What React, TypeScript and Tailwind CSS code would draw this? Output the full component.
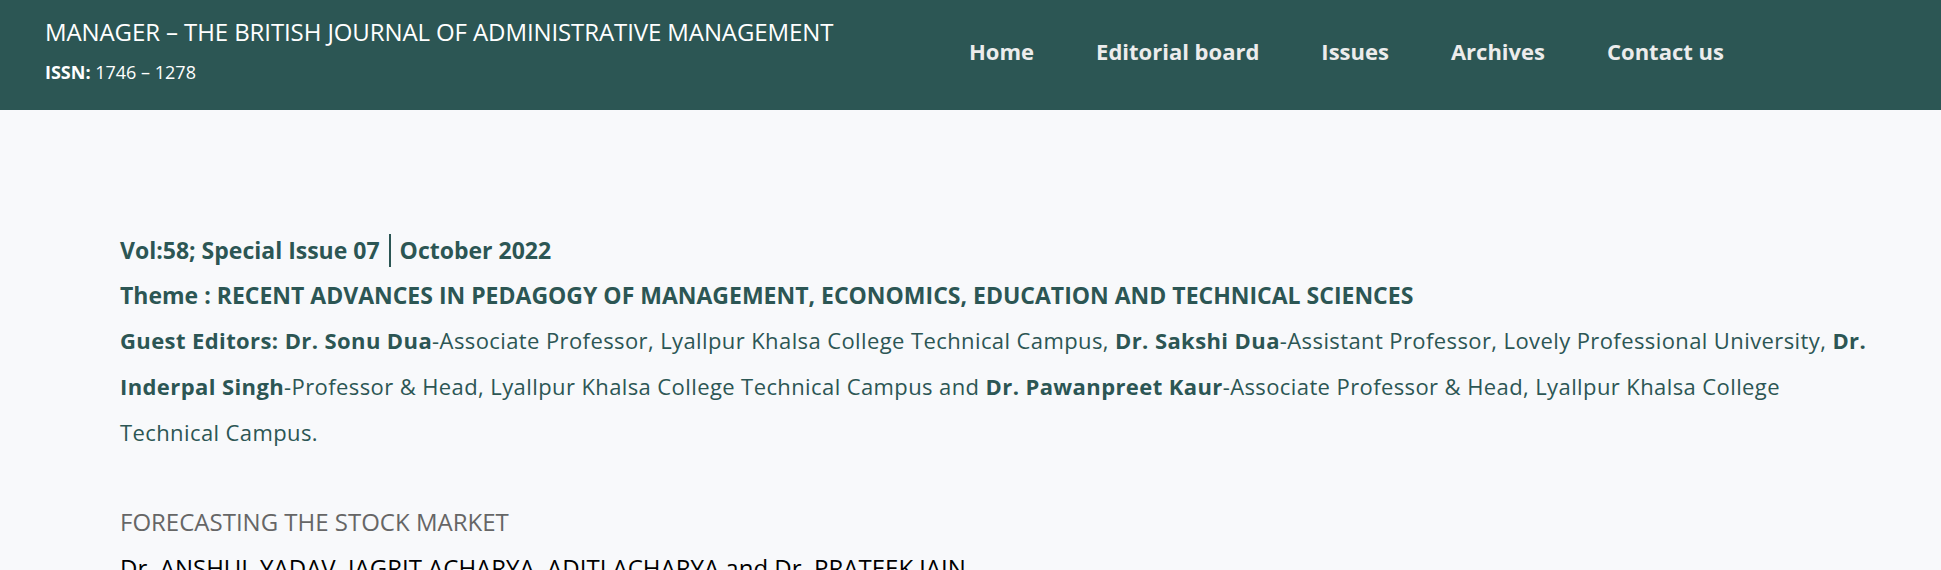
import React from 'react';

const navigation = ['Home', 'Editorial board', 'Issues', 'Archives', 'Contact us'];

export default function App() {
	return (
		<div className="min-h-screen bg-[#f8f9fb] font-['Open_Sans',sans-serif]">
			{/* Header */}
			<header className="h-[110px] bg-[#2c5654] flex">
				<div className="w-[969px] shrink-0 pl-[45px] pt-[16px]">
					<div className="text-[24px] leading-[32px] text-white tracking-[-0.1px]">
						MANAGER – THE BRITISH JOURNAL OF ADMINISTRATIVE MANAGEMENT
					</div>
					<div className="mt-[12px] text-[18px] leading-[24px] text-white">
						<span className="font-bold">ISSN:</span> 1746 – 1278
					</div>
				</div>
				<nav className="flex items-start pt-[36px] gap-[62px]">
					{navigation.map((item) => (
						<a key={item} href="#" className="text-[22px] leading-[30px] font-bold text-[#ececec]">
							{item}
						</a>
					))}
				</nav>
			</header>

			{/* Issue details */}
			<main className="pl-[120px] pr-[66px] pt-[117px] text-[#2c5654]">
				<div className="text-[23px] leading-[46px] font-bold flex items-center">
					Vol:58; Special Issue 07
					<span className="mx-[9px] w-[2px] h-[33px] bg-[#2c5654]"></span>
					October 2022
				</div>
				<div className="text-[23px] leading-[44px] font-bold">
					Theme : RECENT ADVANCES IN PEDAGOGY OF MANAGEMENT, ECONOMICS, EDUCATION AND TECHNICAL SCIENCES
				</div>
				<p className="text-[22px] leading-[46px] tracking-[0.4px]">
					<b>Guest Editors: Dr. Sonu Dua</b>-Associate Professor, Lyallpur Khalsa College Technical Campus, <b>Dr. Sakshi Dua</b>-Assistant Professor, Lovely Professional University, <b>Dr. Inderpal Singh</b>-Professor &amp; Head, Lyallpur Khalsa College Technical Campus and <b>Dr. Pawanpreet Kaur</b>-Associate Professor &amp; Head, Lyallpur Khalsa College Technical Campus.
				</p>

				<div className="mt-[44px] text-[24px] leading-[46px] text-[#666666]">FORECASTING THE STOCK MARKET</div>
				<div className="text-[24px] leading-[46px] text-black">
					Dr. ANSHUL YADAV, JAGRIT ACHARYA, ADITI ACHARYA and Dr. PRATEEK JAIN
				</div>
			</main>
		</div>
	);
}
